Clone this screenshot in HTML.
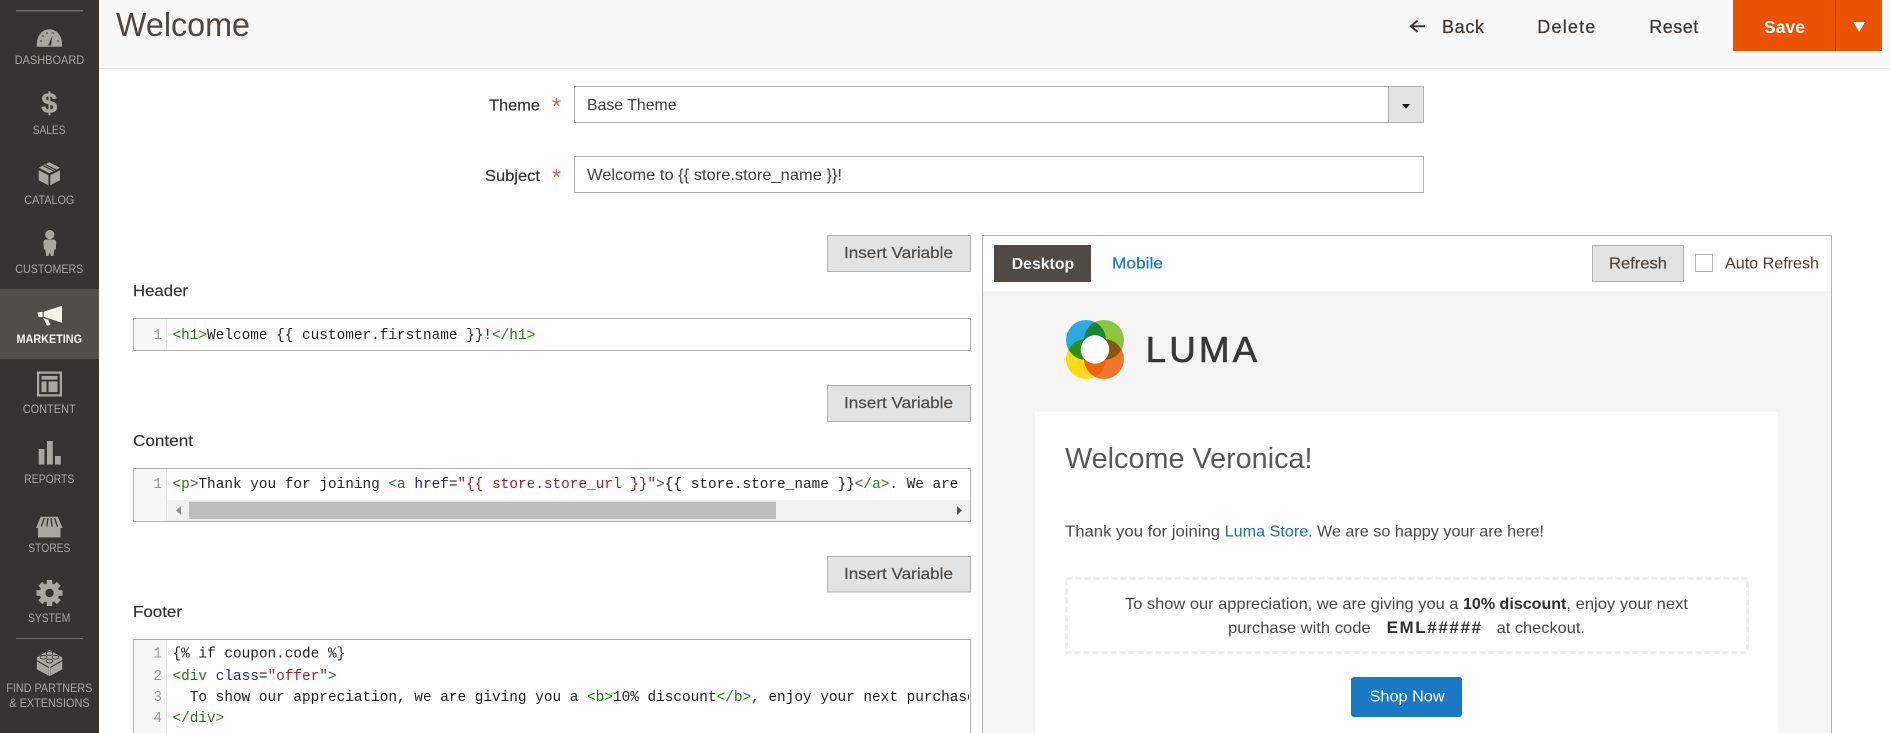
<!DOCTYPE html>
<html lang="en">
<head>
<meta charset="utf-8">
<title>Welcome</title>
<style>
html,body{margin:0;padding:0;width:1890px;height:733px;overflow:hidden;background:#fff}
svg{display:block;font-family:"Liberation Sans",sans-serif}
text{white-space:pre}
.nav{font-size:12px;fill:#aaa6a0;text-anchor:start}
.ic{fill:#aaa6a0}
.cut{stroke:#373330;fill:none}
.act{font-size:18px;fill:#41362f;stroke:#41362f;stroke-width:.25}
.lbl{font-size:16px;fill:#303030;stroke:#303030;stroke-width:.15}
.btn{fill:#e3e3e3;stroke:#b0b0b0;stroke-width:1}
.bt{font-size:16px;fill:#514943;stroke:#514943;stroke-width:.2}
.box{fill:#fff;stroke:#b0b0b0;stroke-width:1}
.in{font-size:16px;fill:#404040}
.mono{font-family:"Liberation Mono",monospace;font-size:14.4px;fill:#222}
.ln{font-family:"Liberation Mono",monospace;font-size:14.4px;fill:#999;text-anchor:end}
.g{fill:#227711}.b{fill:#1a1aa6}.r{fill:#992222}
.p{font-size:16px;fill:#484848}
.pb{font-size:16px;fill:#303030;font-weight:bold}
.blend circle{mix-blend-mode:multiply}
</style>
</head>
<body>
<svg width="1890" height="733" viewBox="0 0 1890 733" xmlns="http://www.w3.org/2000/svg">
<defs>
<clipPath id="c3"><rect x="167" y="640" width="802" height="93"/></clipPath>
</defs>

<!-- sidebar -->
<g>
<rect x="0" y="0" width="99" height="733" fill="#373330"/>
<rect x="0" y="289" width="99" height="70" fill="#524d48"/>
<rect x="16" y="10" width="67" height="1.5" fill="#736e69"/>
<rect x="16" y="638" width="67" height="1" fill="#736e69"/>

<!-- dashboard -->
<path class="ic" d="M36.8 46.7C36 36 42 29.3 49.4 29.3S62.8 36 62 46.7Z"/>
<path d="M48.2 45.2L52.4 35.5L51 45.6Z" fill="#373330"/>
<g fill="#373330"><circle cx="41" cy="41" r=".8"/><circle cx="43" cy="36" r=".8"/><circle cx="47" cy="33" r=".8"/><circle cx="53" cy="33" r=".8"/><circle cx="58" cy="41" r=".8"/></g>
<text class="nav" x="14.7" y="64" textLength="69.5" lengthAdjust="spacingAndGlyphs">DASHBOARD</text>

<!-- sales -->
<text x="49.3" y="113" font-size="29" font-weight="bold" text-anchor="middle" fill="#aaa6a0" stroke="#aaa6a0" stroke-width=".4">$</text>
<text class="nav" x="32.7" y="134" textLength="32.8" lengthAdjust="spacingAndGlyphs">SALES</text>

<!-- catalog -->
<path class="ic" d="M49.3 162.3L60 167.8L49.3 173.3L38.7 167.8Z"/>
<path class="ic" d="M38.7 170.2L48.4 175.2V185.3L38.7 180.2Z"/>
<path class="ic" d="M60 170.2L50.3 175.2V185.3L60 180.2Z"/>
<path class="cut" stroke-width="1.2" d="M43.6 165.8L53.7 171M45.6 164.6L55.8 169.8"/>
<text class="nav" x="24.3" y="204" textLength="50" lengthAdjust="spacingAndGlyphs">CATALOG</text>

<!-- customers -->
<circle class="ic" cx="49.8" cy="234.6" r="4.6"/>
<path class="ic" d="M46 239.5H53.6C55 239.5 56.2 240.6 56.2 242L55.8 249.5H54.4L53.4 256H51.2L49.8 252.5L48.4 256H46.2L45.2 249.5H43.8L43.4 242C43.4 240.6 44.6 239.5 46 239.5Z"/>
<text class="nav" x="15.3" y="273" textLength="68" lengthAdjust="spacingAndGlyphs">CUSTOMERS</text>

<!-- marketing -->
<g fill="#f7f3eb">
<path d="M62 305.7V322.7L43.7 316.9V311.7Z"/>
<path d="M37.3 312.4L42.6 311.8V317.2L38.6 316.8Z"/>
<path d="M43.4 318.2L48.4 319.7L50.4 325L47 325.8Z"/>
</g>
<text x="16.5" y="343" font-size="12" font-weight="bold" fill="#f7f3eb" textLength="65.5" lengthAdjust="spacingAndGlyphs">MARKETING</text>

<!-- content -->
<rect x="38.1" y="372.6" width="22.8" height="22.8" fill="none" stroke="#aaa6a0" stroke-width="2.2"/>
<rect class="ic" x="41.5" y="376" width="16" height="3.6"/>
<rect class="ic" x="41.5" y="381.5" width="5" height="10.5"/>
<rect class="ic" x="48.5" y="381.5" width="9" height="10.5"/>
<text class="nav" x="22.7" y="413" textLength="53" lengthAdjust="spacingAndGlyphs">CONTENT</text>

<!-- reports -->
<rect class="ic" x="38.7" y="449" width="5.7" height="15.5"/>
<rect class="ic" x="47" y="441" width="5.8" height="23.5"/>
<rect class="ic" x="55" y="456" width="5.8" height="8.5"/>
<text class="nav" x="24.3" y="483" textLength="50" lengthAdjust="spacingAndGlyphs">REPORTS</text>

<!-- stores -->
<path class="ic" d="M40.8 516.7H57.8L62.5 528H36Z"/>
<rect class="ic" x="38" y="526" width="22.5" height="11.4"/>
<path class="cut" stroke-width="1.3" d="M44.3 518L41.3 526.5M48 518L46.8 526.5M51 518L52 526.5M54.5 518L57.5 526.5"/>
<text class="nav" x="28.3" y="552" textLength="42" lengthAdjust="spacingAndGlyphs">STORES</text>

<!-- system -->
<g class="ic" transform="translate(49.5 593)">
<circle r="9.8"/>
<rect x="-2.8" y="-13" width="5.6" height="5"/>
<rect x="-2.8" y="-13" width="5.6" height="5" transform="rotate(45)"/>
<rect x="-2.8" y="-13" width="5.6" height="5" transform="rotate(90)"/>
<rect x="-2.8" y="-13" width="5.6" height="5" transform="rotate(135)"/>
<rect x="-2.8" y="-13" width="5.6" height="5" transform="rotate(180)"/>
<rect x="-2.8" y="-13" width="5.6" height="5" transform="rotate(225)"/>
<rect x="-2.8" y="-13" width="5.6" height="5" transform="rotate(270)"/>
<rect x="-2.8" y="-13" width="5.6" height="5" transform="rotate(315)"/>
<circle r="4.2" fill="#373330"/>
</g>
<text class="nav" x="28" y="622" textLength="42.3" lengthAdjust="spacingAndGlyphs">SYSTEM</text>

<!-- partners -->
<path class="ic" d="M49.5 650L62.3 657.5V660L50.2 667V675.7H48.8V667L36.8 660V657.5Z"/>
<path class="ic" d="M36.8 661.2L48.7 668V675.7L36.8 669.2Z"/>
<path class="ic" d="M62.3 661.2L50.3 668V675.7L62.3 669.2Z"/>
<g fill="#aaa6a0" stroke="#373330" stroke-width=".8">
<ellipse cx="49.5" cy="653.5" rx="3.4" ry="1.9"/>
<ellipse cx="43.5" cy="657.2" rx="3.4" ry="1.9"/>
<ellipse cx="55.5" cy="657.2" rx="3.4" ry="1.9"/>
<ellipse cx="49.5" cy="661" rx="3.4" ry="1.9"/>
</g>
<text class="nav" x="6.3" y="692" textLength="86" lengthAdjust="spacingAndGlyphs">FIND PARTNERS</text>
<text class="nav" x="9.3" y="707" textLength="80.3" lengthAdjust="spacingAndGlyphs">&amp; EXTENSIONS</text>
</g>

<!-- top bar -->
<g>
<rect x="99" y="0" width="1791" height="68" fill="#f8f8f8"/>
<rect x="99" y="68" width="1791" height="1" fill="#e3e3e3"/>
<text x="116" y="36" font-size="33" fill="#4f4740" textLength="134" lengthAdjust="spacingAndGlyphs">Welcome</text>
<path d="M1425 26.3H1411.5M1417.5 20.5L1411 26.3L1417.5 32" fill="none" stroke="#41362f" stroke-width="2"/>
<text class="act" x="1442" y="32.8" textLength="42" lengthAdjust="spacing">Back</text>
<text class="act" x="1537.3" y="32.8" textLength="58" lengthAdjust="spacing">Delete</text>
<text class="act" x="1649.3" y="32.8" textLength="49" lengthAdjust="spacing">Reset</text>
<rect x="1733" y="0" width="149" height="51" fill="#eb5202"/>
<rect x="1835" y="0" width="1" height="51" fill="#b84002"/>
<text x="1764" y="32.8" font-size="17.5" font-weight="bold" fill="#fff" textLength="41" lengthAdjust="spacingAndGlyphs">Save</text>
<path d="M1853.3 22H1865L1859.2 32Z" fill="#fff"/>
</g>

<!-- theme / subject -->
<g>
<text class="lbl" x="489" y="110.7" textLength="51" lengthAdjust="spacingAndGlyphs">Theme</text>
<text x="552" y="114" font-size="23" fill="#e2603a">*</text>
<rect class="box" x="574.5" y="86.5" width="849" height="36"/>
<rect class="btn" x="1388.5" y="86.5" width="35" height="36"/>
<path d="M1402 104H1410L1406 108.8Z" fill="#111"/>
<text class="in" x="587" y="109.8" textLength="89.5" lengthAdjust="spacingAndGlyphs">Base Theme</text>

<text class="lbl" x="485" y="181" textLength="55" lengthAdjust="spacingAndGlyphs">Subject</text>
<text x="552" y="185" font-size="23" fill="#e2603a">*</text>
<rect class="box" x="574.5" y="156.5" width="849" height="36"/>
<text class="in" x="587" y="180" textLength="255" lengthAdjust="spacingAndGlyphs">Welcome to {{ store.store_name }}!</text>
</g>

<!-- editors -->
<g>
<rect class="btn" x="827.5" y="235.5" width="143" height="36"/>
<text class="bt" x="844" y="258" textLength="109" lengthAdjust="spacingAndGlyphs">Insert Variable</text>
<text class="lbl" x="133" y="296" textLength="55" lengthAdjust="spacingAndGlyphs">Header</text>
<rect class="box" x="133.5" y="318.5" width="837" height="32"/>
<rect x="134" y="319" width="32" height="31" fill="#f7f7f7"/>
<rect x="166" y="319" width="1" height="31" fill="#e3e3e3"/>
<text class="ln" x="162" y="339">1</text>
<text class="mono" x="172.5" y="339"><tspan class="g">&lt;h1&gt;</tspan>Welcome {{ customer.firstname }}!<tspan class="g">&lt;/h1&gt;</tspan></text>

<rect class="btn" x="827.5" y="385.5" width="143" height="36"/>
<text class="bt" x="844" y="408" textLength="109" lengthAdjust="spacingAndGlyphs">Insert Variable</text>
<text class="lbl" x="133" y="446" textLength="60" lengthAdjust="spacingAndGlyphs">Content</text>
<rect class="box" x="133.5" y="468.5" width="837" height="53"/>
<rect x="134" y="469" width="32" height="52" fill="#f7f7f7"/>
<rect x="166" y="469" width="1" height="52" fill="#e3e3e3"/>
<text class="ln" x="162" y="488">1</text>
<text class="mono" x="172.5" y="488"><tspan class="g">&lt;p&gt;</tspan>Thank you for joining <tspan class="g">&lt;a</tspan> <tspan class="b">href</tspan>=<tspan class="r">"{{ store.store_url }}"</tspan><tspan class="g">&gt;</tspan>{{ store.store_name }}<tspan class="g">&lt;/a&gt;</tspan>. We are</text>
<rect x="167.5" y="500" width="802.5" height="21" fill="#f0f0f0"/>
<rect x="189" y="501.7" width="587" height="17.3" fill="#bdbdbd"/>
<path d="M181 506V515L176 510.5Z" fill="#8f8f8f"/>
<path d="M957 506V515L962 510.5Z" fill="#555"/>

<rect class="btn" x="827.5" y="556.5" width="143" height="35.5"/>
<text class="bt" x="844" y="579" textLength="109" lengthAdjust="spacingAndGlyphs">Insert Variable</text>
<text class="lbl" x="133" y="617" textLength="49" lengthAdjust="spacingAndGlyphs">Footer</text>
<rect class="box" x="133.5" y="639.5" width="837" height="110"/>
<rect x="134" y="640" width="32" height="93" fill="#f7f7f7"/>
<rect x="166" y="640" width="1" height="93" fill="#e3e3e3"/>
<text class="ln" x="162" y="657.5">1</text>
<text class="ln" x="162" y="680">2</text>
<text class="ln" x="162" y="701">3</text>
<text class="ln" x="162" y="722">4</text>
<g clip-path="url(#c3)">
<text class="mono" x="172.5" y="657.5">{% if coupon.code %}</text>
<text class="mono" x="172.5" y="680"><tspan class="g">&lt;div</tspan> <tspan class="b">class</tspan>=<tspan class="r">"offer"</tspan><tspan class="g">&gt;</tspan></text>
<text class="mono" x="172.5" y="701">  To show our appreciation, we are giving you a <tspan class="g">&lt;b&gt;</tspan>10% discount<tspan class="g">&lt;/b&gt;</tspan>, enjoy your next purchase with</text>
<text class="mono" x="172.5" y="722"><tspan class="g">&lt;/div&gt;</tspan></text>
</g>
</g>

<!-- preview panel -->
<g>
<rect x="982.5" y="235.5" width="849" height="510" fill="#fff" stroke="#b0b0b0" stroke-width="1"/>
<rect x="983" y="291" width="848" height="442" fill="#f5f5f5"/>
<rect x="994" y="245" width="97" height="37" fill="#514943"/>
<text x="1011.7" y="269" font-size="16" font-weight="bold" fill="#fff" textLength="62.5" lengthAdjust="spacingAndGlyphs">Desktop</text>
<text x="1112" y="268.5" font-size="16" fill="#1979c3" stroke="#1979c3" stroke-width=".25" textLength="51" lengthAdjust="spacingAndGlyphs">Mobile</text>
<rect class="btn" x="1592.5" y="245.5" width="91" height="36"/>
<text class="bt" x="1609" y="268.7" textLength="58" lengthAdjust="spacingAndGlyphs">Refresh</text>
<rect x="1695.5" y="254.5" width="17" height="17" fill="#fff" stroke="#b0b0b0" stroke-width="1"/>
<text x="1725" y="268.7" font-size="16" fill="#4a4037" textLength="94" lengthAdjust="spacingAndGlyphs">Auto Refresh</text>

<!-- logo -->
<g class="blend" style="isolation:isolate">
<circle cx="1086" cy="340" r="20" fill="#29abe2"/>
<circle cx="1104" cy="340" r="20" fill="#8cc63f"/>
<circle cx="1086" cy="359" r="20" fill="#ffd91a"/>
<circle cx="1104" cy="359" r="20" fill="#f1732d"/>
</g>
<circle cx="1095" cy="349.5" r="14.2" fill="#fff"/>
<text x="1145.7" y="362" font-size="36" fill="#383838" stroke="#383838" stroke-width=".6" letter-spacing="3" textLength="114.5" lengthAdjust="spacingAndGlyphs">LUMA</text>

<!-- card -->
<rect x="1035" y="411.7" width="743" height="322" fill="#fff"/>
<text x="1065" y="468" font-size="28.5" fill="#595959" textLength="247.5" lengthAdjust="spacingAndGlyphs">Welcome Veronica!</text>
<text class="p" x="1065" y="536.5" textLength="159.7" lengthAdjust="spacingAndGlyphs">Thank you for joining </text>
<text class="p" x="1224.7" y="536.5" style="fill:#1a6fa8" textLength="83.5" lengthAdjust="spacingAndGlyphs">Luma Store</text>
<text class="p" x="1308" y="536.5" textLength="236" lengthAdjust="spacingAndGlyphs">. We are so happy your are here!</text>
<rect x="1066.5" y="578.5" width="681" height="74" fill="none" stroke="#efefef" stroke-width="3" stroke-dasharray="6 3"/>
<text class="p" x="1125" y="609" textLength="338" lengthAdjust="spacingAndGlyphs">To show our appreciation, we are giving you a </text>
<text class="pb" x="1463" y="609" textLength="103.4" lengthAdjust="spacingAndGlyphs">10% discount</text>
<text class="p" x="1566.4" y="609" textLength="121.6" lengthAdjust="spacingAndGlyphs">, enjoy your next</text>
<text class="p" x="1228" y="633" textLength="142.6" lengthAdjust="spacingAndGlyphs">purchase with code</text>
<text class="pb" x="1386.6" y="633" style="font-size:17px" textLength="94.4" lengthAdjust="spacing">EML#####</text>
<text class="p" x="1496.6" y="633" textLength="88.4" lengthAdjust="spacingAndGlyphs">at checkout.</text>
<rect x="1351" y="677" width="111" height="40" rx="3" fill="#1979c3"/>
<text x="1369.6" y="701.7" font-size="16" fill="#fff" textLength="75" lengthAdjust="spacingAndGlyphs">Shop Now</text>
</g>
</svg>
</body>
</html>
